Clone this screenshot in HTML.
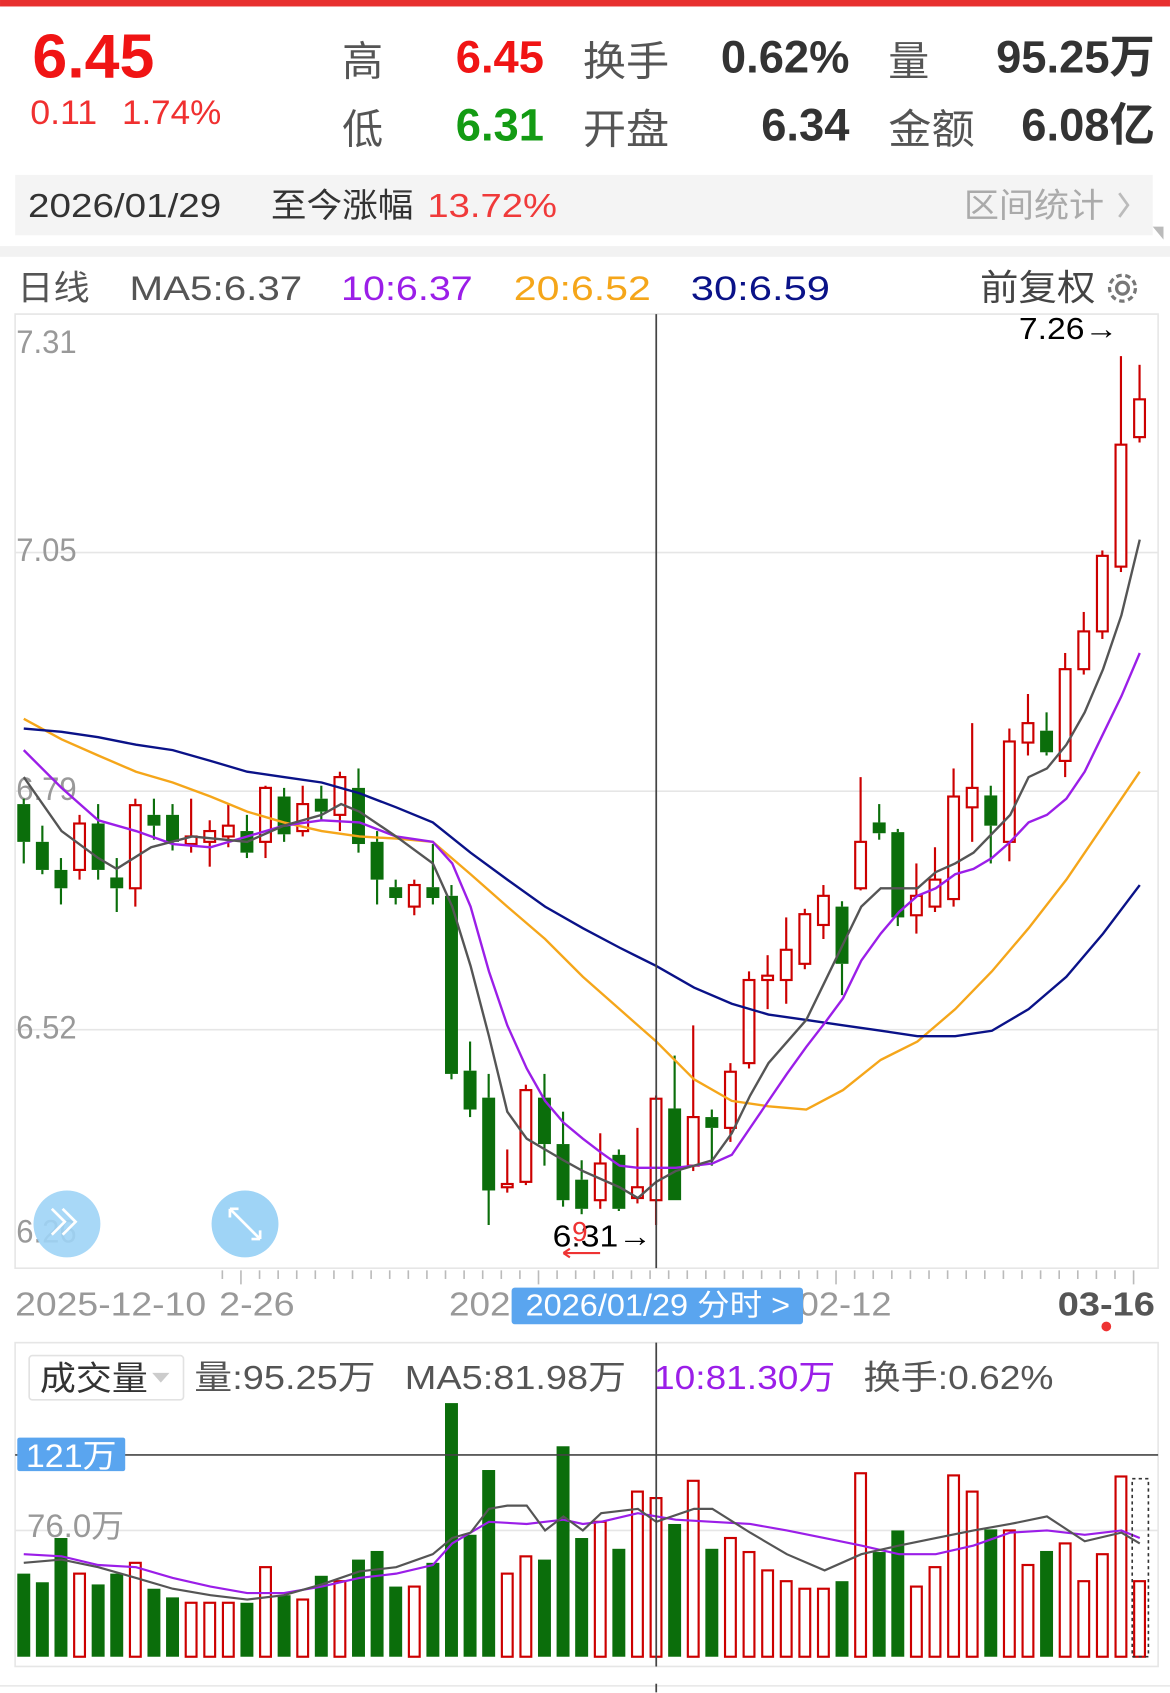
<!DOCTYPE html>
<html><head><meta charset="utf-8"><style>
html,body{margin:0;padding:0;background:#fff;width:1170px;height:1693px;overflow:hidden}
svg{display:block}
text{font-family:"Liberation Sans","Noto Sans CJK SC",sans-serif}
</style></head><body>
<svg id="s" width="1170" height="1693" viewBox="0 0 1084 1568.6" xmlns="http://www.w3.org/2000/svg">
<rect x="0" y="0" width="1084" height="6" fill="#e8302f"/>
<text x="30" y="72" font-size="58" font-weight="bold" fill="#f01414" textLength="113" lengthAdjust="spacingAndGlyphs">6.45</text>
<text x="28" y="115" font-size="32" fill="#f03030" textLength="62" lengthAdjust="spacingAndGlyphs">0.11</text>
<text x="113" y="115" font-size="32" fill="#f03030" textLength="92" lengthAdjust="spacingAndGlyphs">1.74%</text>
<g font-size="38" fill="#555"><text x="317" y="70">高</text><text x="317" y="133">低</text><text x="540" y="70" textLength="80" lengthAdjust="spacingAndGlyphs">换手</text><text x="540" y="133" textLength="80" lengthAdjust="spacingAndGlyphs">开盘</text><text x="823" y="70">量</text><text x="823" y="133" textLength="80" lengthAdjust="spacingAndGlyphs">金额</text></g>
<g font-size="42" font-weight="bold" text-anchor="end"><text x="504" y="67" fill="#f01414">6.45</text><text x="504" y="130" fill="#139b13">6.31</text><text x="787" y="67" fill="#333">0.62%</text><text x="787" y="130" fill="#333">6.34</text><text x="1070" y="67" fill="#333">95.25万</text><text x="1070" y="130" fill="#333">6.08亿</text></g>
<rect x="14" y="162" width="1054" height="56" fill="#f4f4f4"/>
<text x="26" y="201" font-size="31" fill="#333" textLength="179" lengthAdjust="spacingAndGlyphs">2026/01/29</text>
<text x="251" y="201" font-size="31" fill="#333" textLength="132" lengthAdjust="spacingAndGlyphs">至今涨幅</text>
<text x="396" y="201" font-size="31" fill="#f03a3a" textLength="120" lengthAdjust="spacingAndGlyphs">13.72%</text>
<text x="893" y="201" font-size="31" fill="#aaa" textLength="130" lengthAdjust="spacingAndGlyphs">区间统计</text>
<path d="M1037 179 L1045 190 L1037 201" stroke="#bbb" stroke-width="2.5" fill="none"/>
<path d="M1068 210 L1078 210 L1078 222 Z" fill="#bbb"/>
<rect x="0" y="228" width="1084" height="10" fill="#f2f2f2"/>
<text x="16" y="278" font-size="32" fill="#555" textLength="67" lengthAdjust="spacingAndGlyphs">日线</text>
<text x="120" y="278" font-size="32" fill="#555" textLength="160" lengthAdjust="spacingAndGlyphs">MA5:6.37</text>
<text x="316" y="278" font-size="32" fill="#9b1ee8" textLength="122" lengthAdjust="spacingAndGlyphs">10:6.37</text>
<text x="476" y="278" font-size="32" fill="#f5a61a" textLength="127" lengthAdjust="spacingAndGlyphs">20:6.52</text>
<text x="640" y="278" font-size="32" fill="#0a1288" textLength="129" lengthAdjust="spacingAndGlyphs">30:6.59</text>
<text x="908" y="278" font-size="33" fill="#444" textLength="107" lengthAdjust="spacingAndGlyphs">前复权</text>
<g transform="translate(1040,267)" fill="none" stroke="#777" stroke-width="3"><circle r="5.5"/><circle r="12" stroke-dasharray="5 3.4"/></g>
<g stroke="#e6e6e6" stroke-width="1.5" fill="none">
<rect x="14" y="291" width="1059" height="884"/>
<line x1="14" y1="512" x2="1073" y2="512"/><line x1="14" y1="733" x2="1073" y2="733"/><line x1="14" y1="954" x2="1073" y2="954"/>
</g>
<g font-size="30" fill="#999"><text x="15" y="327" textLength="56" lengthAdjust="spacingAndGlyphs">7.31</text><text x="15" y="520" textLength="56" lengthAdjust="spacingAndGlyphs">7.05</text><text x="15" y="741" textLength="56" lengthAdjust="spacingAndGlyphs">6.79</text><text x="15" y="962" textLength="56" lengthAdjust="spacingAndGlyphs">6.52</text><text x="15" y="1151" textLength="56" lengthAdjust="spacingAndGlyphs">6.26</text></g>
<g id="cand"></g>
<g id="ma" fill="none" stroke-width="2.2"></g>
<line x1="608" y1="291" x2="608" y2="1175" stroke="#444" stroke-width="1.6"/>
<text x="944" y="314" font-size="28" fill="#000" textLength="92" lengthAdjust="spacingAndGlyphs">7.26→</text>
<text x="512" y="1155" font-size="28" fill="#000" textLength="92" lengthAdjust="spacingAndGlyphs">6.31→</text>
<text x="530" y="1150" font-size="26" fill="#e33">9</text>
<path d="M522 1161 L556 1161 M522 1161 l6 -4 M522 1161 l6 4" stroke="#e33" stroke-width="2"/>
<circle cx="62" cy="1134" r="31" fill="#9fd4f6" opacity="0.9"/>
<path d="M48 1120 l12 12 l-12 12 M58 1120 l12 12 l-12 12" stroke="#fff" stroke-width="2.5" fill="none"/>
<circle cx="227" cy="1134" r="31" fill="#9fd4f6"/>
<path d="M213 1120 l28 28 M213 1120 h8 M213 1120 v8 M241 1148 h-8 M241 1148 v-8" stroke="#fff" stroke-width="2.5" fill="none"/>
<g stroke="#bbb" stroke-width="1.5" id="ticks"></g>
<g font-size="31" fill="#999"><text x="14" y="1219" textLength="177" lengthAdjust="spacingAndGlyphs">2025-12-10</text><text x="203" y="1219" textLength="70" lengthAdjust="spacingAndGlyphs">2-26</text><text x="416" y="1219" textLength="76" lengthAdjust="spacingAndGlyphs">2026</text><text x="740" y="1219" textLength="86" lengthAdjust="spacingAndGlyphs">02-12</text></g>
<text x="980" y="1219" font-size="31" fill="#555" font-weight="bold" textLength="90" lengthAdjust="spacingAndGlyphs">03-16</text>
<circle cx="1025" cy="1229" r="4.5" fill="#e33"/>
<rect x="474" y="1193" width="270" height="34" rx="3" fill="#5aa5ef"/>
<text x="487" y="1219" font-size="28" fill="#fff" textLength="245" lengthAdjust="spacingAndGlyphs">2026/01/29 分时 &gt;</text>
<rect x="14" y="1244" width="1059" height="300" fill="none" stroke="#e6e6e6" stroke-width="1.5"/>
<rect x="27" y="1256" width="143" height="41" rx="3" fill="#fff" stroke="#e2e2e2" stroke-width="1.5"/>
<text x="37" y="1288" font-size="31" fill="#333" textLength="100" lengthAdjust="spacingAndGlyphs">成交量</text>
<path d="M141 1272 h16 l-8 9z" fill="#ccc"/>
<text x="180" y="1287" font-size="31" fill="#555" textLength="168" lengthAdjust="spacingAndGlyphs">量:95.25万</text>
<text x="375" y="1287" font-size="31" fill="#555" textLength="205" lengthAdjust="spacingAndGlyphs">MA5:81.98万</text>
<text x="606" y="1287" font-size="31" fill="#9b1ee8" textLength="168" lengthAdjust="spacingAndGlyphs">10:81.30万</text>
<text x="800" y="1287" font-size="31" fill="#555" textLength="176" lengthAdjust="spacingAndGlyphs">换手:0.62%</text>
<line x1="14" y1="1418" x2="1073" y2="1418" stroke="#e6e6e6" stroke-width="1.5"/>
<g id="vol"></g>
<line x1="14" y1="1348" x2="1073" y2="1348" stroke="#444" stroke-width="1.5"/>
<rect x="16" y="1332" width="100" height="31" rx="2" fill="#5aa5ef"/>
<text x="24" y="1359" font-size="30" fill="#fff" textLength="84" lengthAdjust="spacingAndGlyphs">121万</text>
<text x="25" y="1424" font-size="30" fill="#999" textLength="90" lengthAdjust="spacingAndGlyphs">76.0万</text>
<g id="vma" fill="none" stroke-width="2"></g>
<rect x="1049" y="1370" width="15" height="165" fill="none" stroke="#333" stroke-dasharray="3 3" stroke-width="1.5"/>
<line x1="608" y1="1244" x2="608" y2="1544" stroke="#444" stroke-width="1.6"/>
<line x1="0" y1="1562" x2="1084" y2="1562" stroke="#e6e6e6" stroke-width="1.5"/>
<line x1="608" y1="1560" x2="608" y2="1568" stroke="#444" stroke-width="1.6"/>
</svg>
<script>
var NS="http://www.w3.org/2000/svg";
function el(p,t,a){var e=document.createElementNS(NS,t);for(var k in a)e.setAttribute(k,a[k]);p.appendChild(e);return e;}
var C=[["g",745,780,740,800],["g",780,806,765,810],["g",806,823,795,838],["r",763,806,755,815],["g",763,806,745,815],["g",813,823,795,845],["r",746,823,740,840],["g",755,765,740,778],["g",755,780,745,788],["r",775,782,740,790],["r",770,780,760,803],["r",765,775,745,785],["g",770,790,755,795],["r",730,780,728,795],["g",738,773,730,780],["r",745,770,728,775],["g",740,752,728,760],["r",720,755,715,770],["g",730,782,712,790],["g",780,815,770,838],["g",822,832,815,838],["r",820,840,815,848],["g",822,832,782,838],["g",830,995,820,1000],["g",992,1028,965,1035],["g",1017,1103,995,1135],["r",1097,1100,1065,1105],["r",1010,1095,1005,1098],["g",1017,1060,995,1080],["g",1060,1112,1030,1118],["g",1093,1120,1075,1125],["r",1078,1112,1050,1120],["g",1070,1120,1065,1122],["r",1100,1110,1045,1115],["r",1018,1112,1015,1135],["g",1027,1112,978,1112],["r",1035,1080,950,1085],["g",1035,1045,1028,1080],["r",993,1045,985,1058],["r",908,985,900,990],["r",904,908,885,935],["r",880,908,850,930],["r",847,893,842,898],["r",830,857,820,870],["g",840,893,835,922],["r",780,823,720,825],["g",762,772,745,778],["g",771,850,768,858],["r",830,848,800,865],["r",815,840,785,845],["r",738,833,712,840],["r",730,748,670,780],["g",737,765,728,800],["r",687,780,675,798],["r",670,688,643,700],["g",677,697,660,700],["r",620,705,605,720],["r",585,620,567,625],["r",515,585,510,592],["r",412,525,330,530],["r",370,405,338,410]];
var V=[1458,1466,1425,1458,1468,1458,1448,1472,1480,1485,1485,1485,1485,1452,1478,1482,1460,1465,1445,1437,1470,1470,1448,1300,1422,1362,1458,1442,1445,1340,1425,1410,1435,1382,1388,1412,1372,1435,1425,1438,1455,1465,1472,1472,1465,1365,1438,1418,1470,1452,1367,1382,1417,1418,1450,1437,1430,1465,1440,1368,1465];
var vg=["g","g","g","r","g","g","r","g","g","r","r","r","g","r","g","r","g","r","g","g","g","r","g","g","g","g","r","r","g","g","g","r","g","r","r","g","r","g","r","r","r","r","r","r","g","r","g","g","r","r","r","r","g","r","r","g","r","r","r","r","r"];
var cg=document.getElementById("cand"),vG=document.getElementById("vol"),tk=document.getElementById("ticks");
var RED="#cc0000",GR="#0b6e0b",W=12;
C.forEach(function(c,i){var x=22+i*17.23;var col=c[0]=="r"?RED:GR;
 el(cg,"line",{x1:x,y1:c[3],x2:x,y2:c[1],stroke:col,"stroke-width":2});
 el(cg,"line",{x1:x,y1:c[2],x2:x,y2:c[4],stroke:col,"stroke-width":2});
 if(c[0]=="r")el(cg,"rect",{x:x-W/2+1,y:c[1],width:W-2,height:Math.max(c[2]-c[1],2),fill:"#fff",stroke:RED,"stroke-width":2});
 else el(cg,"rect",{x:x-W/2,y:c[1],width:W,height:Math.max(c[2]-c[1],2),fill:GR});
 if(vg[i]=="r")el(vG,"rect",{x:x-W/2+1,y:V[i],width:W-2,height:1535-V[i],fill:"#fff",stroke:RED,"stroke-width":2});
 else el(vG,"rect",{x:x-W/2,y:V[i],width:W,height:1535-V[i],fill:GR});
});
for(var t=0;t<50;t++){var x=206+t*17.23;if(x>1060)break;var big=(Math.abs(x-229)<6||Math.abs(x-505)<9||Math.abs(x-781)<9||Math.abs(x-1056)<9);el(tk,"line",{x1:x,y1:1177,x2:x,y2:big?1190:1185});}
var ma=document.getElementById("ma");
function pl(g,pts,col){el(g,"polyline",{points:pts,stroke:col});}
pl(ma,"22,666 57,685 91,700 126,715 160,725 195,738 229,752 263,762 298,770 333,775 367,777 401,780 436,810 470,840 505,870 540,905 574,935 608,965 643,1000 678,1020 712,1025 747,1028 781,1010 816,982 850,965 885,935 919,900 953,860 988,815 1022,765 1056,715","#f5a61a");
pl(ma,"22,675 57,678 91,683 126,690 160,695 195,705 229,715 263,720 298,725 333,735 367,748 401,762 436,790 470,815 505,840 540,860 574,878 608,895 643,915 678,930 712,940 747,945 781,950 816,955 850,960 885,960 919,955 953,935 988,905 1022,865 1056,820","#0a1288");
pl(ma,"22,695 57,730 91,760 126,770 160,782 195,785 229,775 263,765 298,760 333,762 367,775 401,780 419,800 436,840 453,900 470,950 488,990 505,1020 522,1040 540,1055 557,1068 574,1080 591,1082 626,1082 660,1078 678,1070 695,1045 712,1020 729,995 747,970 764,948 781,925 798,890 816,865 833,845 850,830 867,823 885,810 902,805 919,795 936,780 953,762 970,755 988,740 1005,715 1022,680 1039,645 1056,605","#9b1ee8");
pl(ma,"22,720 57,770 91,795 108,805 140,785 178,775 229,780 263,765 298,755 316,745 333,752 367,775 401,800 419,840 436,895 453,960 470,1030 488,1055 505,1065 522,1075 540,1085 574,1100 591,1110 608,1095 626,1085 660,1075 678,1050 695,1015 712,985 747,945 764,910 781,875 798,840 816,823 850,823 867,808 885,800 902,790 936,755 953,720 970,712 988,690 1005,660 1022,620 1039,570 1056,500","#555");
var vm=document.getElementById("vma");
pl(vm,"22,1440 57,1442 91,1450 126,1452 160,1462 195,1470 229,1476 263,1476 298,1470 333,1462 367,1458 401,1450 419,1430 436,1420 453,1410 488,1412 505,1410 522,1408 540,1412 557,1410 591,1402 626,1408 660,1410 695,1412 729,1418 764,1425 798,1432 833,1440 867,1440 902,1432 936,1420 970,1418 1005,1422 1039,1418 1056,1425","#9b1ee8");
pl(vm,"22,1448 57,1445 91,1452 126,1462 160,1472 195,1478 229,1482 263,1478 298,1468 333,1456 367,1452 401,1440 419,1425 436,1420 453,1398 470,1395 488,1395 505,1418 522,1405 540,1418 557,1402 591,1398 608,1410 643,1398 660,1398 695,1420 729,1440 764,1455 798,1440 833,1432 867,1425 902,1418 936,1412 970,1405 1005,1428 1039,1420 1056,1430","#555");
</script>
</body></html>
